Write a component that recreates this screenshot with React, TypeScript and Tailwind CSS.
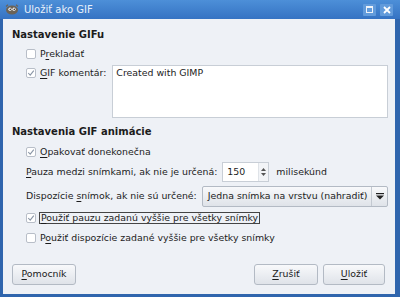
import React from "react";

const U = ({ c }: { c: string }) => <span className="underline underline-offset-[1.5px]">{c}</span>;

function Check({ checked }: { checked?: boolean }) {
  return (
    <span className="inline-flex h-[10px] w-[10px] shrink-0 items-center justify-center rounded-[2px] border border-[#b8bec8] bg-white">
      {checked && (
        <svg width="8" height="8" viewBox="0 0 8 8">
          <path d="M1.2 4 L3.2 6.2 L6.8 1.6" stroke="#8a96a6" strokeWidth="1.1" fill="none" />
        </svg>
      )}
    </span>
  );
}

function Btn({ children, className = "" }: { children: React.ReactNode; className?: string }) {
  return (
    <div
      className={`flex h-[21px] items-center justify-center rounded-[3px] border border-[#b3bac4] bg-gradient-to-b from-[#f8f9fb] to-[#dfe3e9] text-[9.4px] text-[#1a1a1a] ${className}`}
    >
      {children}
    </div>
  );
}

export default function App() {
  return (
    <div
      className="flex h-[297px] w-[400px] flex-col bg-[#2f65ad] text-[9.4px] text-[#1c1c1c]"
      style={{ fontFamily: '"DejaVu Sans", sans-serif' }}
    >
      {/* Title bar */}
      <div className="flex h-[19px] shrink-0 items-center bg-gradient-to-b from-[#4d8fd8] to-[#3573c3] pl-[5px] pr-[7px]">
        <svg width="14" height="11" viewBox="0 0 14 11" className="mr-[5px]">
          <ellipse cx="7" cy="6" rx="6" ry="4.5" fill="#6b6357" />
          <circle cx="5" cy="5.2" r="1.6" fill="#fff" />
          <circle cx="9" cy="5.2" r="1.6" fill="#fff" />
          <circle cx="5.2" cy="5.3" r="0.7" fill="#000" />
          <circle cx="9.2" cy="5.3" r="0.7" fill="#000" />
          <path d="M1 2.5 L3 0.8 M13 2.5 L11 0.8" stroke="#6b6357" strokeWidth="1.2" />
        </svg>
        <span className="text-[10px] text-[#e9f0fa]">Uložiť ako GIF</span>
        <div className="ml-auto flex gap-[4px]">
          <div className="flex h-[12px] w-[13px] items-center justify-center rounded-[1px] bg-[#629bdb]">
            <div className="h-[7px] w-[7px] border border-t-2 border-[#eef3fa]" />
          </div>
          <div className="flex h-[12px] w-[13px] items-center justify-center rounded-[1px] bg-[#629bdb]">
            <svg width="8" height="8" viewBox="0 0 8 8">
              <path d="M1 1 L7 7 M7 1 L1 7" stroke="#fff" strokeWidth="1.8" />
            </svg>
          </div>
        </div>
      </div>

      {/* Body */}
      <div className="ml-[3px] mr-[5px] mb-[3px] flex flex-1 flex-col bg-[#eef1f6] pl-[9px] pr-[7px] pt-[9px]">
        <div className="h-[14px] text-[10px] font-bold leading-[14px]">Nastavenie GIFu</div>
        <div className="mt-[3px] flex h-[18px] items-center gap-[4px] pl-[14px]">
          <Check />
          <span>
            P<U c="r" />ekladať
          </span>
        </div>
        <div className="mt-[2px] flex pl-[14px]">
          <div className="flex h-[16px] items-center gap-[4px]">
            <Check checked />
            <span>
              <U c="G" />IF komentár:
            </span>
          </div>
          <div className="ml-[6px] h-[53px] flex-1 border border-[#c8ced6] bg-white px-[3px] pt-[1px] leading-[12px]">
            Created with GIMP
          </div>
        </div>

        <div className="mt-[7px] h-[14px] text-[10px] font-bold leading-[14px]">Nastavenia GIF animácie</div>
        <div className="mt-[4px] flex h-[18px] items-center gap-[4px] pl-[14px]">
          <Check checked />
          <span>
            <U c="O" />pakovať donekonečna
          </span>
        </div>
        <div className="mt-[1px] flex h-[20px] items-center pl-[14px]">
          <span>
            <U c="P" />auza medzi snímkami, ak nie je určená:
          </span>
          <div className="ml-[5px] flex h-[20px] w-[47px] items-center border border-[#c8ced6] bg-white">
            <span className="flex-1 pl-[4px]">150</span>
            <div className="flex h-full w-[10px] flex-col items-center justify-center gap-[2px] border-l border-[#dfe3e8] bg-[#f2f4f7]">
              <svg width="5" height="3" viewBox="0 0 5 3">
                <path d="M0 3 L2.5 0 L5 3Z" fill="#555" />
              </svg>
              <svg width="5" height="3" viewBox="0 0 5 3">
                <path d="M0 0 L2.5 3 L5 0Z" fill="#555" />
              </svg>
            </div>
          </div>
          <span className="ml-[7px]">milisekúnd</span>
        </div>
        <div className="mt-[4px] flex h-[21px] items-center pl-[14px]">
          <span>
            Dispozície <U c="s" />nímok, ak nie sú určené:
          </span>
          <div className="ml-[5px] flex h-[21px] flex-1 items-center rounded-[2px] border border-[#b3bac4] bg-gradient-to-b from-[#f8f9fb] to-[#dfe3e9]">
            <span className="flex-1 pl-[5px]">Jedna snímka na vrstvu (nahradiť)</span>
            <div className="flex h-full w-[16px] items-center justify-center border-l border-[#c3c9d1]">
              <svg width="8" height="7" viewBox="0 0 8 7">
                <rect x="0" y="0" width="8" height="1.2" fill="#222" />
                <path d="M0 2.5 L8 2.5 L4 6.5Z" fill="#222" />
              </svg>
            </div>
          </div>
        </div>
        <div className="mt-[2px] flex h-[18px] items-center gap-[3px] pl-[14px]">
          <Check checked />
          <span className="border border-[#444] px-[1px] leading-[10px]">
            <U c="P" />oužiť pauzu zadanú vyššie pre všetky snímky
          </span>
        </div>
        <div className="mt-[2px] flex h-[18px] items-center gap-[4px] pl-[14px]">
          <Check />
          <span>
            P<U c="o" />užiť dispozície zadané vyššie pre všetky snímky
          </span>
        </div>

        <div className="mt-auto mb-[9px] flex items-center">
          <Btn className="w-[64px]">
            <span>
              <U c="P" />omocník
            </span>
          </Btn>
          <Btn className="ml-auto w-[64px]">
            <span>
              <U c="Z" />rušiť
            </span>
          </Btn>
          <Btn className="ml-[5px] mr-[3px] w-[62px] border-[#8fb2dc]">
            <span>
              <U c="U" />ložiť
            </span>
          </Btn>
        </div>
      </div>
    </div>
  );
}
